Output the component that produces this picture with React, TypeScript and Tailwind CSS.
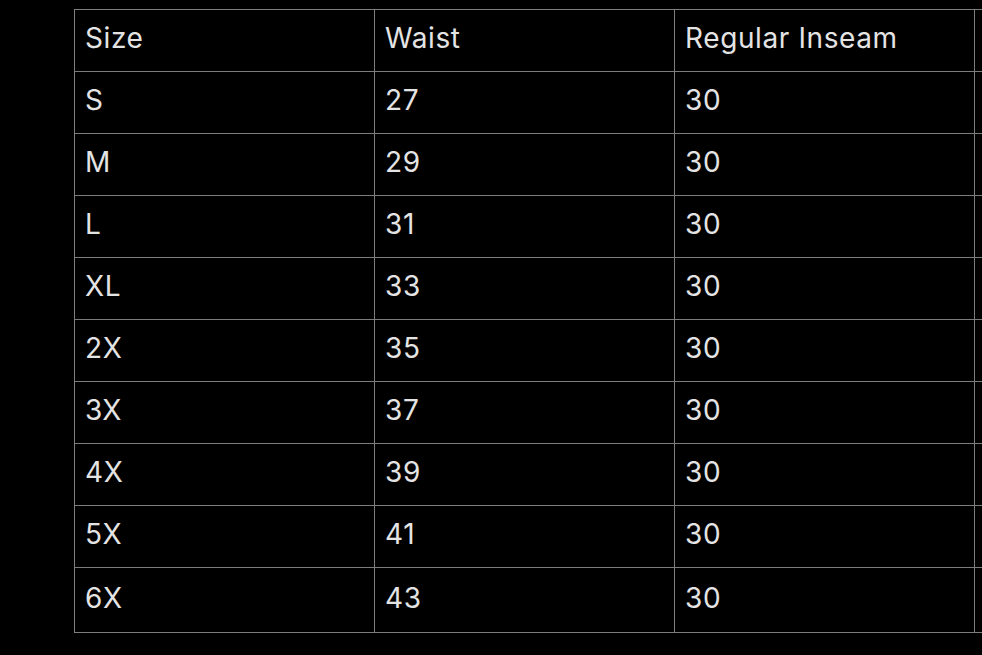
import React from "react";

const rows: [string, string, string][] = [
  ["S", "27", "30"],
  ["M", "29", "30"],
  ["L", "31", "30"],
  ["XL", "33", "30"],
  ["2X", "35", "30"],
  ["3X", "37", "30"],
  ["4X", "39", "30"],
  ["5X", "41", "30"],
  ["6X", "43", "30"],
];

const cell =
  "border border-[#7d7d7d] w-[300px] pl-[10px] pr-2 pb-[5px] text-left align-middle font-normal";

export default function App() {
  return (
    <div
      className="w-[982px] h-[655px] overflow-hidden bg-black text-[#e4e4e4] pl-[74px] pt-[9px]"
      style={{ fontFamily: "Inter, 'Noto Sans', sans-serif" }}
    >
      <table className="border-collapse table-fixed w-[1201px] text-[28px] leading-none tracking-[0.6px]">
        <thead>
          <tr className="h-[62px]">
            <th className={cell}>Size</th>
            <th className={cell}>Waist</th>
            <th className={cell}>Regular Inseam</th>
            <th className={cell}></th>
          </tr>
        </thead>
        <tbody>
          {rows.map((r, idx) => (
            <tr
              key={r[0]}
              className={idx === rows.length - 1 ? "h-[65px]" : "h-[62px]"}
            >
              {r.map((v, i) => (
                <td key={i} className={cell}>
                  {v}
                </td>
              ))}
              <td className={cell}></td>
            </tr>
          ))}
        </tbody>
      </table>
    </div>
  );
}
